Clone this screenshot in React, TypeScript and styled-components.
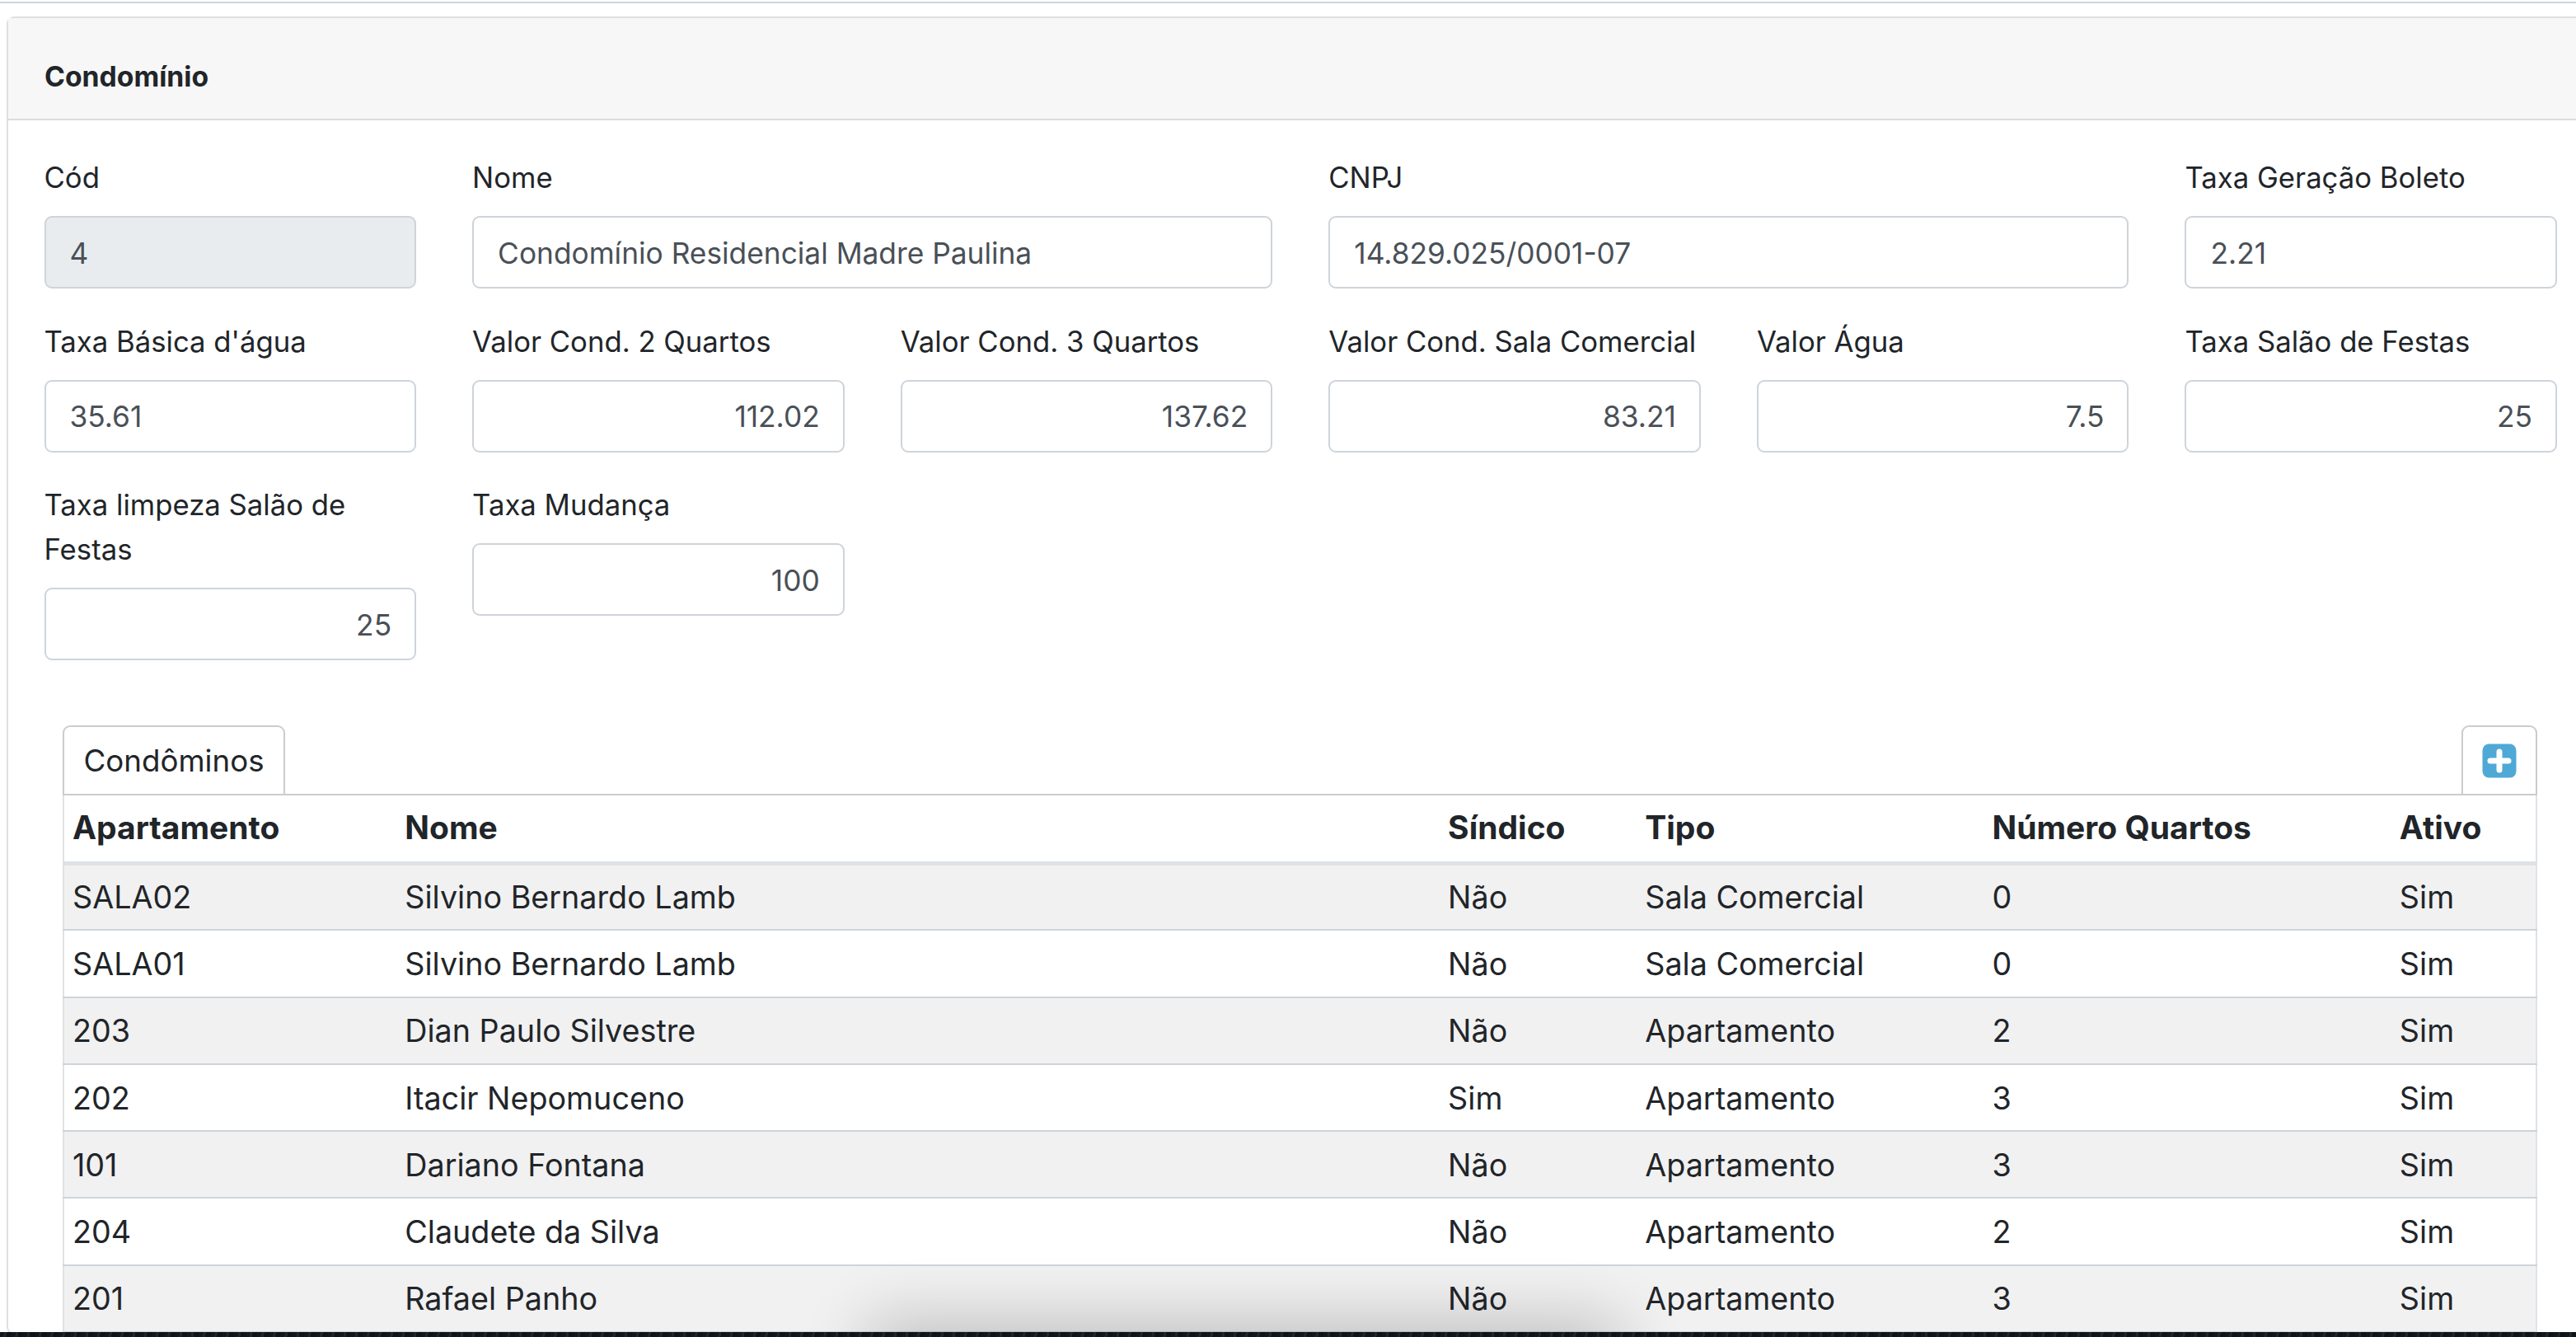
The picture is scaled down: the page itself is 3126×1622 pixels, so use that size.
import React from "react";
import styled, { createGlobalStyle } from "styled-components";

const Global = createGlobalStyle`
  html, body { margin: 0; padding: 0; background: #fff; overflow: hidden; }
  * { box-sizing: border-box; }
  body { font-family: Inter, "Liberation Sans", sans-serif; font-size: 35.3px; line-height: 54px; color: #212529; }
`;

const Page = styled.div`
  position: relative;
  width: 3126px;
  height: 1622px;
  overflow: hidden;
  background: #fff;
`;

const TopRule = styled.div`
  height: 4px;
  border-bottom: 2px solid #ced4da;
`;

const Card = styled.section`
  margin: 16px -40px 0 8px;
  border: 2px solid #dfdfdf;
  border-radius: 9px;
`;

const CardHeader = styled.header`
  height: 124px;
  padding: 20px 44px 0;
  display: flex;
  align-items: center;
  background: #f7f7f7;
  border-bottom: 2px solid #dcdcdc;
  font-size: 33.7px;
  font-weight: 700;
`;

const CardBody = styled.div`
  padding: 42px 0 0 9.5px;
`;

const FormGrid = styled.div`
  display: grid;
  grid-template-columns: repeat(6, 519.6px);
  row-gap: 36.5px;
  align-items: start;
`;

const Field = styled.div<{ $span?: number }>`
  grid-column: span ${(p) => p.$span ?? 1};
  padding: 0 34px;
`;

const Label = styled.label`
  display: block;
  margin-bottom: 20px;
  font-size: 34.7px;
  line-height: 54px;
`;

const Input = styled.div<{ $right?: boolean; $disabled?: boolean }>`
  height: 88px;
  padding: 3px 28px 0 29px;
  display: flex;
  align-items: center;
  justify-content: ${(p) => (p.$right ? "flex-end" : "flex-start")};
  border: 2px solid #ced4da;
  border-radius: 9px;
  background: ${(p) => (p.$disabled ? "#e9ecef" : "#fff")};
  color: #495057;
`;

const TableArea = styled.div`
  width: 3003px;
  margin: 79px 0 0 56.5px;
`;

const Tabs = styled.div`
  height: 85px;
  display: flex;
  justify-content: space-between;
  border-bottom: 2px solid #ccc;
`;

const Tab = styled.div<{ $icon?: boolean }>`
  height: 85px;
  width: ${(p) => (p.$icon ? "92px" : "270px")};
  display: flex;
  align-items: center;
  justify-content: center;
  border: 2px solid #ccc;
  border-radius: 9px 9px 0 0;
  background: #fff;
  font-size: 36.7px;
`;

const Table = styled.table`
  width: 100%;
  table-layout: fixed;
  border-collapse: collapse;
  border-left: 2px solid #dee2e6;
  border-right: 2px solid #dee2e6;
`;

const Th = styled.th`
  height: 82px;
  padding: 0 10px 2px;
  text-align: left;
  font-size: 39px;
  font-weight: 700;
  border-bottom: 5px solid #dee2e6;
`;

const Tr = styled.tr<{ $striped: boolean }>`
  background: ${(p) => (p.$striped ? "#f1f1f1" : "#fff")};
`;

const Td = styled.td`
  height: 81.3px;
  padding: 0 10px;
  font-size: 37.7px;
  border-bottom: 2px solid #ced4da;
`;

const BottomStrip = styled.div`
  position: absolute;
  left: 0;
  right: 0;
  bottom: 0;
  height: 6px;
  background: repeating-linear-gradient(100deg, #11181d 0 5px, #1d272c 5px 8px, #0d1316 8px 14px);
`;

const WindowShadow = styled.div`
  position: absolute;
  left: 1060px;
  width: 900px;
  top: 1616px;
  height: 60px;
  background: #1a2023;
  box-shadow: 0 -4px 80px 6px rgba(0, 0, 0, 0.24);
`;

const columns = [404, 1265, 239, 421, 494, 176];
const heads = ["Apartamento", "Nome", "Síndico", "Tipo", "Número Quartos", "Ativo"];
const rows = [
  ["SALA02", "Silvino Bernardo Lamb", "Não", "Sala Comercial", "0", "Sim"],
  ["SALA01", "Silvino Bernardo Lamb", "Não", "Sala Comercial", "0", "Sim"],
  ["203", "Dian Paulo Silvestre", "Não", "Apartamento", "2", "Sim"],
  ["202", "Itacir Nepomuceno", "Sim", "Apartamento", "3", "Sim"],
  ["101", "Dariano Fontana", "Não", "Apartamento", "3", "Sim"],
  ["204", "Claudete da Silva", "Não", "Apartamento", "2", "Sim"],
  ["201", "Rafael Panho", "Não", "Apartamento", "3", "Sim"],
];

const fields: { label: string; value: string; span?: number; right?: boolean; disabled?: boolean }[] = [
  { label: "Cód", value: "4", disabled: true },
  { label: "Nome", value: "Condomínio Residencial Madre Paulina", span: 2 },
  { label: "CNPJ", value: "14.829.025/0001-07", span: 2 },
  { label: "Taxa Geração Boleto", value: "2.21" },
  { label: "Taxa Básica d'água", value: "35.61" },
  { label: "Valor Cond. 2 Quartos", value: "112.02", right: true },
  { label: "Valor Cond. 3 Quartos", value: "137.62", right: true },
  { label: "Valor Cond. Sala Comercial", value: "83.21", right: true },
  { label: "Valor Água", value: "7.5", right: true },
  { label: "Taxa Salão de Festas", value: "25", right: true },
  { label: "Taxa limpeza Salão de Festas", value: "25", right: true },
  { label: "Taxa Mudança", value: "100", right: true },
];

const PlusIcon = () => (
  <svg width="42" height="42" viewBox="0 0 42 42" aria-hidden="true">
    <rect x="0.5" y="0.5" width="41" height="41" rx="8" fill="#4fa9d6" />
    <path d="M21 10v22M10 21h22" stroke="#fff" strokeWidth="7" strokeLinecap="round" />
  </svg>
);

export default function App() {
  return (
    <Page>
      <Global />
      <TopRule />
      <Card>
        <CardHeader>Condomínio</CardHeader>
        <CardBody>
          <FormGrid>
            {fields.map((f) => (
              <Field key={f.label} $span={f.span}>
                <Label>{f.label}</Label>
                <Input $right={f.right} $disabled={f.disabled}>{f.value}</Input>
              </Field>
            ))}
          </FormGrid>
          <TableArea>
            <Tabs>
              <Tab>Condôminos</Tab>
              <Tab $icon><PlusIcon /></Tab>
            </Tabs>
            <Table>
              <colgroup>
                {columns.map((c, i) => <col key={i} width={c} />)}
              </colgroup>
              <thead>
                <tr>{heads.map((h) => <Th key={h}>{h}</Th>)}</tr>
              </thead>
              <tbody>
                {rows.map((r, i) => (
                  <Tr key={r[0]} $striped={i % 2 === 0}>
                    {r.map((c, j) => <Td key={j}>{c}</Td>)}
                  </Tr>
                ))}
              </tbody>
            </Table>
          </TableArea>
        </CardBody>
      </Card>
      <WindowShadow />
      <BottomStrip />
    </Page>
  );
}
